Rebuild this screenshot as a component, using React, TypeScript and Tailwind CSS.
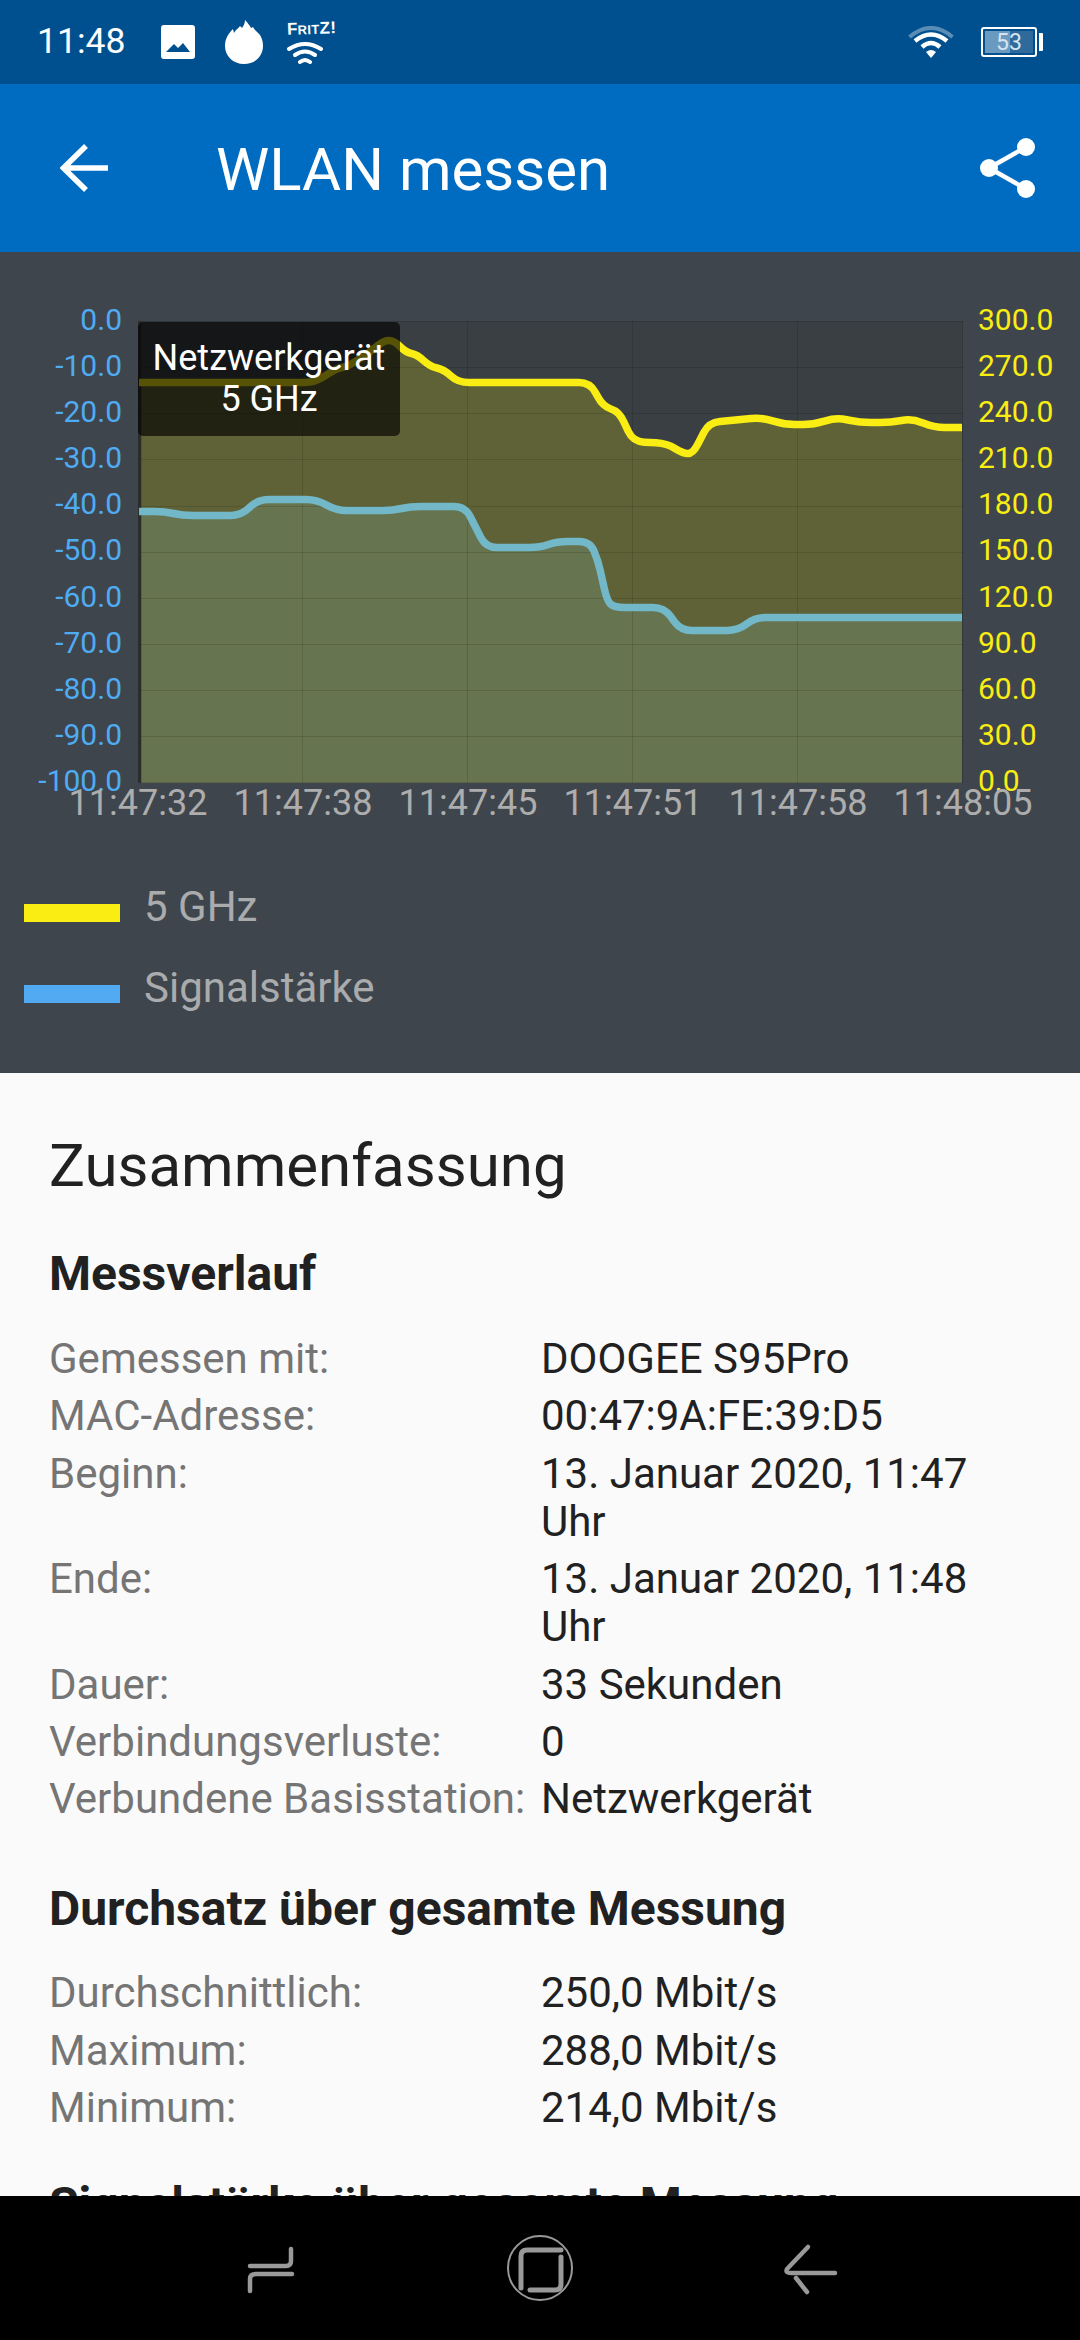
import React from "react";

type P = [number, number];
const OX = 138;
const OY = 320.5;
const yellow: P[] = [[139,382],[315,382],[336,368],[348,366],[372,350],[384,340],[394,340],[406,352],[417,354],[430,366],[444,369],[458,382],[590,382],[603,406],[619,411],[633,441],[667,443],[683,453],[693,453],[709,422],[762,417],[784,424],[814,424],[836,417],[860,422],[891,422],[912,418],[934,427],[962,427]];
const blue: P[] = [[139,511],[165,511],[182,515],[241,515],[258,499],[317,499],[336,510],[393,510],[410,506],[465,506],[486,547],[540,547],[557,541],[590,541],[598,560],[607,600],[614,607],[664,607],[681,630],[738,630],[755,617],[962,617]];

function curve(pts: P[], r = 11) {
  const X = (v: number) => v - OX;
  const Y = (v: number) => v - OY;
  let d = `M${X(pts[0][0])} ${Y(pts[0][1])}`;
  for (let i = 1; i < pts.length - 1; i++) {
    const [ax, ay] = pts[i - 1];
    const [bx, by] = pts[i];
    const [cx, cy] = pts[i + 1];
    const la = Math.hypot(bx - ax, by - ay);
    const lc = Math.hypot(cx - bx, cy - by);
    const ca = Math.min(r, la / 2);
    const cc = Math.min(r, lc / 2);
    const sx = bx + ((ax - bx) / la) * ca;
    const sy = by + ((ay - by) / la) * ca;
    const ex = bx + ((cx - bx) / lc) * cc;
    const ey = by + ((cy - by) / lc) * cc;
    d += ` L${X(sx)} ${Y(sy)} Q${X(bx)} ${Y(by)} ${X(ex)} ${Y(ey)}`;
  }
  const last = pts[pts.length - 1];
  d += ` L${X(last[0])} ${Y(last[1])}`;
  return d;
}
const area = (pts: P[]) => `${curve(pts)} L824 462 L1 462 Z`;

const leftLabels = ["0.0","-10.0","-20.0","-30.0","-40.0","-50.0","-60.0","-70.0","-80.0","-90.0","-100.0"];
const rightLabels = ["300.0","270.0","240.0","210.0","180.0","150.0","120.0","90.0","60.0","30.0","0.0"];
const times = ["11:47:32","11:47:38","11:47:45","11:47:51","11:47:58","11:48:05"];

function Row({ k, v }: { k: string; v: string }) {
  return (
    <div className="grid grid-cols-[492px_1fr] mb-[9.4px]">
      <div className="text-[#757575]">{k}</div>
      <div className="text-[#212121]">{v}</div>
    </div>
  );
}

function Plot() {
  return (
    <svg viewBox="0 0 825 462" className="block w-full h-full">
      <rect width="825" height="462" fill="#3a3f44" />
      <path d={area(yellow)} fill="#5f6236" />
      <path d={area(blue)} fill="#66744f" />
      <g stroke="#000" strokeOpacity="0.12" strokeWidth="1">
        {[46, 92, 138, 185, 231, 277, 323, 369, 415].map((y) => (
          <line key={y} x1="0" x2="825" y1={y + 0.5} y2={y + 0.5} />
        ))}
        {[164.5, 329.5, 494.5, 659.5].map((x) => (
          <line key={x} x1={x} x2={x} y1="0" y2="462" />
        ))}
        <line x1="0" x2="825" y1="0.5" y2="0.5" />
        <line x1="0" x2="825" y1="461.5" y2="461.5" />
        <line x1="824.5" x2="824.5" y1="0" y2="462" />
      </g>
      <line x1="1.5" x2="1.5" y1="0" y2="462" stroke="#2a2d2a" strokeWidth="3.5" />
      <path d={curve(yellow)} fill="none" stroke="#f9ed13" strokeWidth="7.5" strokeLinejoin="round" />
      <path d={curve(blue)} fill="none" stroke="#72b8c9" strokeWidth="7.5" strokeLinejoin="round" />
    </svg>
  );
}

export default function App() {
  return (
    <div className="w-[1080px] h-[2340px] overflow-hidden flex flex-col bg-black font-['Roboto',sans-serif]">
      {/* Status bar */}
      <div className="h-[84px] shrink-0 bg-[#00508f] flex items-center text-white relative">
        <span className="ml-[37px] w-[87px] text-[35.5px] leading-none">11:48</span>
        <svg viewBox="0 0 34 34" className="ml-[37px] w-[34px] h-[34px]">
          <path fill="#fff" fillRule="evenodd" d="M3 0H31a3 3 0 0 1 3 3V31a3 3 0 0 1-3 3H3a3 3 0 0 1-3-3V3a3 3 0 0 1 3-3ZM5 27H29L22 18 17 23 13 19Z" />
        </svg>
        <svg viewBox="0 0 38 44" className="ml-[30px] w-[38px] h-[44px]">
          <path fill="#fff" d="M19 44C8 44 0 36 0 26C0 18 4 13 8 9L9 13C11 9 13 9 15 6L17 8C19 5 20 3 20 0C23 3 25 6 26 8L28 7C30 11 33 12 35 15C37 18 38 22 38 26C38 36 30 44 19 44Z" />
        </svg>
        <div className="ml-[24px] w-[46px] flex flex-col items-start">
          <span className="font-['Liberation_Sans',sans-serif] font-bold text-[17px] leading-[15px] tracking-[0.3px] -rotate-2 whitespace-nowrap">
            F<span className="text-[13px]">RIT</span>Z!
          </span>
          <svg viewBox="0 0 36 24" className="mt-[3px] w-[36px] h-[24px]">
            <g fill="none" stroke="#fff" strokeWidth="4" strokeLinecap="round">
              <path d="M2 9Q18 -1 34 9" />
              <path d="M8 15Q18 8 28 15" />
              <path d="M13 22Q18 18 23 22" />
            </g>
          </svg>
        </div>
        <svg viewBox="0 0 46 32" className="ml-auto w-[46px] h-[32px]">
          <path d="M1.5 11Q23 -7 44.5 11" fill="none" stroke="#fff" strokeOpacity="0.35" strokeWidth="4" />
          <path d="M7 15Q23 2 39 15" fill="none" stroke="#fff" strokeWidth="4.5" />
          <path d="M14 21Q23 13 32 21" fill="none" stroke="#fff" strokeWidth="4.5" />
          <path d="M18 26Q23 22 28 26L23 32Z" fill="#fff" />
        </svg>
        <div className="ml-[27px] w-[56px] h-[30px] border-2 border-white rounded-[3px] p-[2px]">
          <div className="w-full h-full bg-[linear-gradient(90deg,#6b9ac0_0%,#6b9ac0_53%,#2f6a9d_53%,#2f6a9d_100%)] flex items-center justify-center text-[23px] leading-none text-[#d5e3ef]">
            53
          </div>
        </div>
        <div className="ml-[2px] mr-[37px] w-[4px] h-[18px] bg-white rounded-r-[1px]" />
      </div>

      {/* App bar */}
      <div className="h-[168px] shrink-0 bg-[#006cc1] flex items-center text-white">
        <svg viewBox="0 0 48 48" className="ml-[60px] w-[48px] h-[48px]">
          <path d="M48 24H4M26 2 3.5 24 26 46" fill="none" stroke="#fff" strokeWidth="5.5" />
        </svg>
        <h1 className="ml-[108px] mt-[3px] text-[60px] leading-none font-normal">WLAN messen</h1>
        <svg viewBox="0 0 56 60" className="ml-auto mr-[44px] w-[56px] h-[60px]">
          <g stroke="#fff" strokeWidth="4.5">
            <line x1="9" y1="30" x2="46" y2="9" />
            <line x1="9" y1="30" x2="46" y2="51" />
          </g>
          <circle cx="46" cy="9" r="9" fill="#fff" />
          <circle cx="9" cy="30" r="9" fill="#fff" />
          <circle cx="46" cy="51" r="9" fill="#fff" />
        </svg>
      </div>

      {/* Chart */}
      <section className="h-[821px] shrink-0 bg-[#3f454c] pt-[68.5px]">
        <div className="flex items-start h-[462px]">
          <div className="w-[138px] shrink-0 -mt-[24px] pr-[16px] text-right text-[30px] text-[#4fabf2]">
            {leftLabels.map((l) => (
              <div key={l} className="h-[46.2px] leading-[46.2px]">{l}</div>
            ))}
          </div>
          <div className="relative w-[825px] h-[462px] shrink-0">
            <Plot />
            <div className="absolute left-0 top-[1px] w-[262px] h-[114px] rounded-[5px] bg-black/65 text-white text-center text-[36px] leading-[41px] pt-[16px]">
              <div>Netzwerkgerät</div>
              <div>5 GHz</div>
            </div>
          </div>
          <div className="-mt-[24px] pl-[15px] text-[30px] text-[#f9ed13]">
            {rightLabels.map((l) => (
              <div key={l} className="h-[46.2px] leading-[46.2px]">{l}</div>
            ))}
          </div>
        </div>
        <div className="relative flex ml-[55.5px] text-[36px] leading-[40px] text-[#adadad]">
          {times.map((t) => (
            <div key={t} className="w-[165px] shrink-0 text-center">{t}</div>
          ))}
        </div>
        <div className="mt-[50px] text-[42px] text-[#a9abad]">
          <div className="h-[81px] flex items-center">
            <div className="ml-[24px] w-[96px] h-[18px] bg-[#f9ed13]" />
            <span className="ml-[24px] pb-[12px] leading-none">5 GHz</span>
          </div>
          <div className="h-[81px] flex items-center">
            <div className="ml-[24px] w-[96px] h-[18px] bg-[#52abf2]" />
            <span className="ml-[24px] pb-[12px] leading-none">Signalstärke</span>
          </div>
        </div>
      </section>

      {/* Summary */}
      <main className="flex-1 min-h-0 overflow-hidden bg-[#fafafa] pl-[49px] pr-[49px] pt-[62px] text-[42px] leading-[48px]">
        <h2 className="text-[60px] leading-[62px] font-normal text-[#212121]">Zusammenfassung</h2>
        <h3 className="mt-[49px] text-[48px] leading-[56px] font-bold text-[#212121]">Messverlauf</h3>
        <div className="mt-[33px]">
          <Row k="Gemessen mit:" v="DOOGEE S95Pro" />
          <Row k="MAC-Adresse:" v="00:47:9A:FE:39:D5" />
          <Row k="Beginn:" v="13. Januar 2020, 11:47 Uhr" />
          <Row k="Ende:" v="13. Januar 2020, 11:48 Uhr" />
          <Row k="Dauer:" v="33 Sekunden" />
          <Row k="Verbindungsverluste:" v="0" />
          <Row k="Verbundene Basisstation:" v="Netzwerkgerät" />
        </div>
        <h3 className="mt-[58px] text-[48px] leading-[56px] font-bold text-[#212121]">Durchsatz über gesamte Messung</h3>
        <div className="mt-[32px]">
          <Row k="Durchschnittlich:" v="250,0 Mbit/s" />
          <Row k="Maximum:" v="288,0 Mbit/s" />
          <Row k="Minimum:" v="214,0 Mbit/s" />
        </div>
        <h3 className="mt-[45px] text-[48px] leading-[56px] font-bold text-[#212121] whitespace-nowrap">Signalstärke über gesamte Messung</h3>
      </main>

      {/* Nav bar */}
      <nav className="h-[144px] shrink-0 bg-black flex items-center pl-[231px] gap-[189px]">
        <svg viewBox="-40 -40 80 80" className="w-[80px] h-[80px]">
          <g fill="none" stroke="#999" strokeWidth="4.5" strokeLinecap="round">
            <path d="M-21 -2H15Q20 -2 20 -7V-19" />
            <path d="M21 6H-15Q-21 6 -21 11V23" />
          </g>
        </svg>
        <svg viewBox="-40 -40 80 80" className="w-[80px] h-[80px]">
          <circle r="32" fill="none" stroke="#999" strokeWidth="2" />
          <g fill="none" stroke="#999" strokeWidth="5" strokeLinecap="round">
            <path d="M-19 20V-12Q-19 -18 -13 -18H21" />
            <path d="M21 -11V16Q21 22 15 22H-10" />
          </g>
        </svg>
        <svg viewBox="-40 -40 80 80" className="w-[80px] h-[80px] ml-[2px]">
          <g fill="none" stroke="#999" strokeWidth="4.5" strokeLinecap="round">
            <path d="M-3 -21-24 1Q-26 5 -20 5H24" />
            <path d="M-15 10-4 24" />
          </g>
        </svg>
      </nav>
    </div>
  );
}
